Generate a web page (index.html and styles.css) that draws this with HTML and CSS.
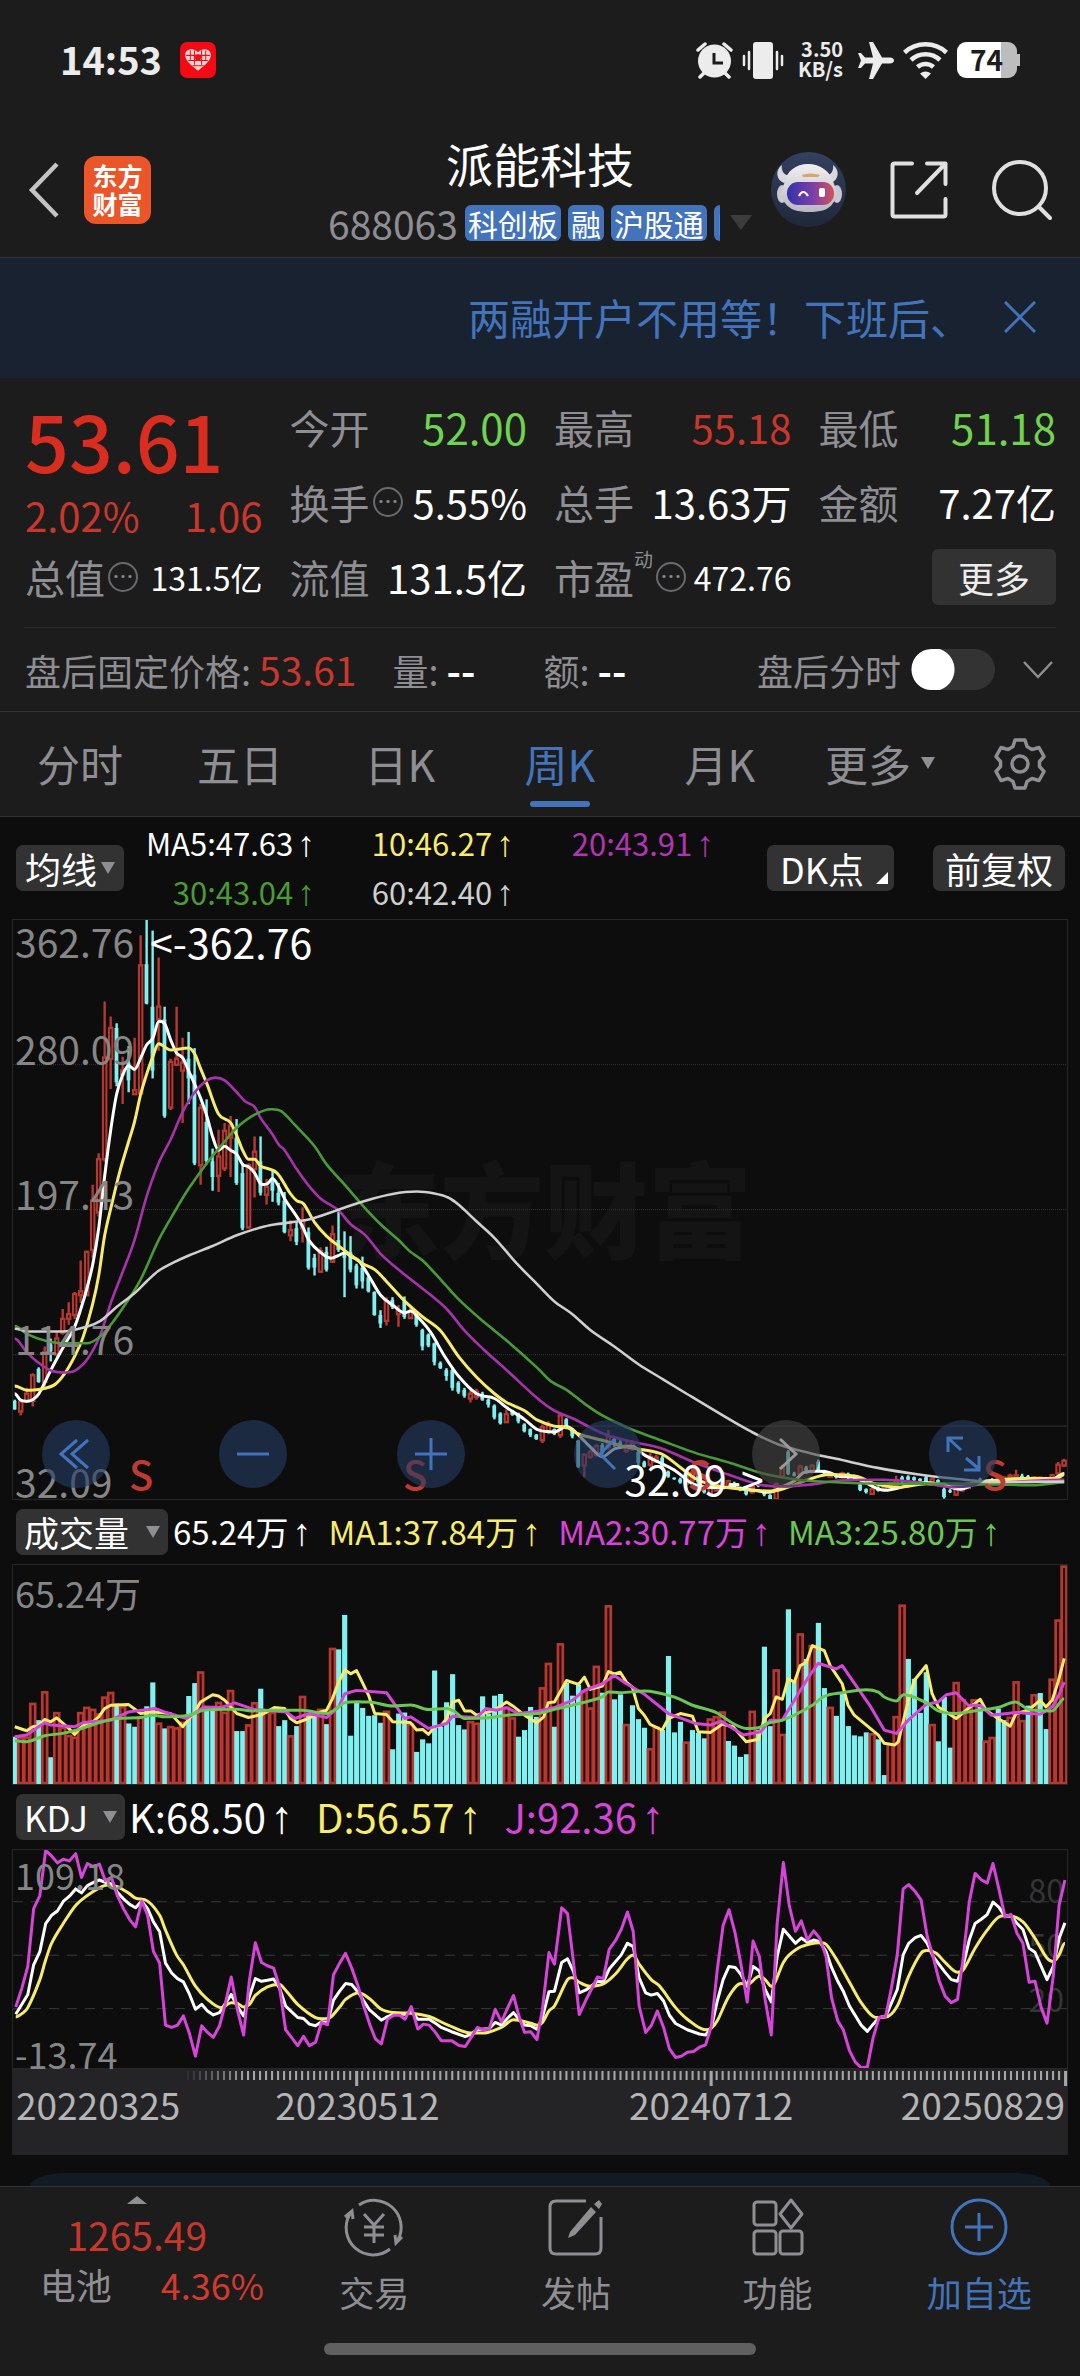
FILE: index.html
```html
<!DOCTYPE html>
<html lang="zh-CN">
<head>
<meta charset="utf-8">
<meta name="viewport" content="width=device-width, initial-scale=1">
<title>派能科技 688063</title>
<link rel="stylesheet" href="styles.css">
</head>
<body>
<div class="statusbar">
  <span class="clock">14:53</span>
  <svg class="badge-heart" viewBox="0 0 35 35"><rect width="35" height="35" rx="7" fill="#f30a14"/><path d="M17.500 28C10 22 5 18 5 12.500C5 7 13 5 17.500 10C22 5 30 7 30 12.500C30 18 25 22 17.500 28Z" fill="#ffd9d9"/><path d="M10 8v10M14 8v14M21 8v14M25 8v10M6 13h23M8 18h19M12 23h11" stroke="#f30a14" stroke-width="1"/><circle cx="17.500" cy="15" r="3" fill="#f30a14"/></svg>
  <div class="status-icons">
    <svg width="37" height="37" viewBox="0 0 37 37" fill="#ececec"><circle cx="18.500" cy="19" r="16.500"/><path d="M2 8L9 2M35 8L28 2M8 31L4 35M29 31L33 35" stroke="#ececec" stroke-width="3.500" stroke-linecap="round"/><path d="M18 11v10h9" fill="none" stroke="#1c1c1c" stroke-width="3"/></svg>
    <svg width="42" height="37" viewBox="0 0 42 37" fill="#ececec"><rect x="11" y="0" width="20" height="37" rx="3"/><path d="M7 10v17M2 14v9M35 10v17M40 14v9" stroke="#ececec" stroke-width="2.500" stroke-linecap="round"/></svg>
    <span class="netspeed"><span>3.50</span><span>KB/s</span></span>
    <svg width="36" height="37" viewBox="0 0 36 37" fill="#ececec"><path d="M36 18.500c0-2-2-3-4-3h-8L15 0h-4l4 15.500H7L3 11H0l3 7.500L0 26h3l4-4.500h8L11 37h4l9-15.500h8c2 0 4-1 4-3z"/></svg>
    <svg width="45" height="37" viewBox="0 0 45 37" fill="none" stroke="#ececec" stroke-width="4.500"><path d="M1.500 10.500a31 31 0 0 1 42 0M8 18a21 21 0 0 1 29 0M14.500 25a12 12 0 0 1 16 0"/><path d="M17 31.500q5.500-4 11 0L22.500 37z" fill="#ececec" stroke="none"/></svg>
    <span class="battery"><span class="battery-cell">74</span></span>
  </div>
</div>

<header class="topbar">
  <div class="topbar-left">
    <button class="icon-btn" aria-label="返回"><svg width="32" height="56" viewBox="0 0 32 56" fill="none" stroke="#c4c4c4" stroke-width="4.500"><path d="M29 2L4 28L29 54"/></svg></button>
    <span class="brand"><span>东方</span><span>财富</span></span>
  </div>
  <div class="topbar-title">
    <h1>派能科技</h1>
    <div class="subline">
      <div class="tags"><span class="code">688063</span><span class="tag">科创板</span><span class="tag">融</span><span class="tag">沪股通</span><span class="tag">L</span></div>
      <svg class="subline-caret" width="22" height="15" viewBox="0 0 22 15"><path d="M0 0h22L11 15z" fill="#3c3c3c"/></svg>
    </div>
  </div>
  <div class="topbar-right">
    <button class="icon-btn" aria-label="智能助手">
      <svg width="75" height="75" viewBox="0 0 75 75"><defs><linearGradient id="sky" x2="0" y2="1"><stop stop-color="#33405f"/><stop offset="1" stop-color="#20283a"/></linearGradient><linearGradient id="visor"><stop stop-color="#3430a8"/><stop offset=".55" stop-color="#7c3fa8"/><stop offset="1" stop-color="#d0525c"/></linearGradient><linearGradient id="shell" x2="0" y2="1"><stop stop-color="#f0eff2"/><stop offset="1" stop-color="#b9b7c0"/></linearGradient></defs><circle cx="37.500" cy="37.500" r="37.500" fill="url(#sky)"/><path d="M11 13C4 18 5 28 13 31L19 24C13 23 10 19 11 13ZM62 13C69 18 68 28 60 31L54 24C60 23 63 19 62 13Z" fill="#d9d8de"/><ellipse cx="11" cy="42" rx="5" ry="9" fill="#c9c7d0"/><ellipse cx="66" cy="42" rx="5" ry="9" fill="#c9c7d0"/><path d="M13 32C15 19 25 12 37 12S60 19 63 32C66 38 67 46 62 51C58 58 49 60 38 60S19 58 14 51C9 46 10 38 13 32Z" fill="url(#shell)"/><rect x="16" y="30" width="47" height="23" rx="11" fill="url(#visor)"/><path d="M28 44q4-8 9 0" fill="none" stroke="#fff" stroke-width="2.200"/><rect x="48" y="36" width="6" height="9" rx="2" fill="#fff"/><path d="M31 23q8-3 18 0l-2 2H32z" fill="#d9a668"/></svg>
    </button>
    <button class="icon-btn" aria-label="分享"><svg width="58" height="58" viewBox="0 0 58 58" fill="none" stroke="#e0e0e0" stroke-width="4" stroke-linecap="round" stroke-linejoin="round"><path d="M22 2.500H4.500q-2 0-2 2v49q0 2 2 2h49q2 0 2-2V38M37 2.500h18.500V23M55 3L27 32"/></svg></button>
    <button class="icon-btn" aria-label="搜索"><svg width="60" height="60" viewBox="0 0 60 60" fill="none" stroke="#e0e0e0" stroke-width="4" stroke-linecap="round"><circle cx="28" cy="28" r="26"/><path d="M47 47L58 58"/></svg></button>
  </div>
</header>

<aside class="banner">
  <a href="#margin">两融开户不用等！下班后、</a>
  <button class="icon-btn" aria-label="关闭"><svg width="32" height="32" viewBox="0 0 32 32" stroke="#4374bb" stroke-width="3"><path d="M1 1L31 31M31 1L1 31"/></svg></button>
</aside>

<section class="quote">
  <div class="quote-grid">
    <div class="price">
      <strong>53.61</strong>
      <div class="change"><span>2.02%</span><span>1.06</span></div>
    </div>
    <div class="cell"><span>今开</span><b class="down">52.00</b></div>
    <div class="cell"><span>最高</span><b class="up">55.18</b></div>
    <div class="cell"><span>最低</span><b class="down">51.18</b></div>
    <div class="cell"><span>换手</span><i class="info"></i><b>5.55%</b></div>
    <div class="cell"><span>总手</span><b>13.63万</b></div>
    <div class="cell"><span>金额</span><b>7.27亿</b></div>
    <div class="cell"><span>总值</span><i class="info"></i><b class="small">131.5亿</b></div>
    <div class="cell"><span>流值</span><b>131.5亿</b></div>
    <div class="cell"><span>市盈</span><sup>动</sup><i class="info"></i><b class="small">472.76</b></div>
    <div class="cell"><button class="more">更多</button></div>
  </div>
  <div class="after-hours">
    <span>盘后固定价格: <b class="up">53.61</b></span>
    <span>量: <b>--</b></span>
    <span class="turnover">额: <b>--</b></span>
    <label class="switch">盘后分时<input type="checkbox"></label>
    <button class="icon-btn" aria-label="展开"><svg width="30" height="18" viewBox="0 0 30 18" fill="none" stroke="#8e8e93" stroke-width="2.500"><path d="M1 1L15 16L29 1"/></svg></button>
  </div>
</section>

<nav class="tabs">
  <a href="#fs">分时</a><a href="#d5">五日</a><a href="#dk">日K</a><a href="#wk" class="active">周K</a><a href="#mk">月K</a>
  <a href="#more">更多<svg width="14" height="12" viewBox="0 0 14 12"><path d="M0 0h14L7 12z" fill="#8e8e93"/></svg></a>
  <button class="icon-btn gear" aria-label="设置"><svg width="52" height="52" viewBox="0 0 52 52" fill="none" stroke="#8e8e93" stroke-width="3.500" stroke-linejoin="round"><path d="M21 2h10l2 6.500l5 3l7-2l5 9l-4.500 5v5l4.500 5l-5 9l-7-2l-5 3L31 50H21l-2-6.500l-5-3l-7 2l-5-9l4.500-5v-5L2 18.500l5-9l7 2l5-3z"/><circle cx="26" cy="26" r="8"/></svg></button>
</nav>

<main class="charts">
  <div class="ma-row">
    <button class="pick">均线<i class="caret"></i></button>
    <div class="ma-values">
      <span class="white">MA5:47.63<i class="arrow">↑</i></span><span class="yellow">10:46.27<i class="arrow">↑</i></span><span class="purple">20:43.91<i class="arrow">↑</i></span>
      <span class="green">30:43.04<i class="arrow">↑</i></span><span class="grey">60:42.40<i class="arrow">↑</i></span>
    </div>
    <button class="pick dk">DK点<i class="corner"></i></button>
    <button class="pick">前复权</button>
  </div>

  <div class="plot plot-price">
    <span class="watermark">东方财富</span>
    <svg id="price" viewBox="36 48 3062 1469" preserveAspectRatio="none"></svg>
    <span class="axis y0">362.76</span><span class="axis y1">280.09</span><span class="axis y2">197.43</span><span class="axis y3">114.76</span><span class="axis y4">32.09</span>
    <span class="sell s1">S</span><span class="sell s2">S</span><span class="sell s3">S</span><span class="sell s4">S</span>
    <div class="controls">
      <button aria-label="最左"><svg viewBox="0 0 68 68"><path d="M35 20L19 34L35 48M46 20L30 34L46 48"/></svg></button>
      <button aria-label="缩小"><svg viewBox="0 0 68 68"><path d="M18 34h32"/></svg></button>
      <button aria-label="放大"><svg viewBox="0 0 68 68"><path d="M18 34h32M34 18v32"/></svg></button>
      <button aria-label="向左"><svg viewBox="0 0 68 68"><path d="M41 19L26 34L41 49"/></svg></button>
      <button aria-label="向右" class="off"><svg viewBox="0 0 68 68"><path d="M28 19L44 34L28 49"/></svg></button>
      <button aria-label="全屏"><svg viewBox="0 0 68 68"><path d="M32 30L19 18M19 32V18h15M37 38L50 49M50 36v14H35"/></svg></button>
    </div>
    <span class="mark high">&lt;-362.76</span><span class="mark low">32.09-&gt;</span>
  </div>

  <div class="sub-row vol">
    <button class="pick">成交量<i class="caret"></i></button>
    <span class="white">65.24万<i class="arrow">↑</i></span><span class="yellow">MA1:37.84万<i class="arrow">↑</i></span><span class="pink">MA2:30.77万<i class="arrow">↑</i></span><span class="lime">MA3:25.80万<i class="arrow">↑</i></span>
  </div>
  <div class="plot plot-volume">
    <svg id="volume" viewBox="36 191 3062 662" preserveAspectRatio="none"></svg>
    <span class="axis v0">65.24万</span>
  </div>

  <div class="sub-row kdj">
    <button class="pick">KDJ<i class="caret"></i></button>
    <span class="white">K:68.50<i class="arrow">↑</i></span><span class="yellow">D:56.57<i class="arrow">↑</i></span><span class="pink">J:92.36<i class="arrow">↑</i></span>
  </div>
  <div class="plot plot-kdj">
    <span class="level l80">80</span><span class="level l50">50</span><span class="level l20">20</span>
    <svg id="kdj" viewBox="36 207 3062 661" preserveAspectRatio="none"></svg>
    <span class="axis k0">109.18</span><span class="axis k1">-13.74</span>
  </div>
  <div class="timeline">
    <svg id="ticks" viewBox="36 0 3062 18" preserveAspectRatio="none"></svg>
    <time class="t0">20220325</time><time class="t1">20230512</time><time class="t2">20240712</time><time class="t3">20250829</time>
  </div>
  <div class="next-card"></div>
</main>

<footer class="dock">
  <div class="dock-row">
    <a class="index" href="#index">
      <svg width="20" height="8" viewBox="0 0 20 8"><path d="M0 8h20L10 0z" fill="#8e8e93"/></svg>
      <span class="index-value">1265.49</span>
      <span class="index-name">电池<b>4.36%</b></span>
    </a>
    <a class="item" href="#trade"><svg width="64" height="60" viewBox="0 0 64 60" fill="none" stroke="#8e8e93" stroke-width="3"><path d="M17 8A27 27 0 0 1 56 43M60 40L54 46L53 38M48 52A27 27 0 0 1 8 17M3 20L10 14L11 22"/><path d="M22 17L32 28L42 17M32 28V46M22 30H42M22 38H42"/></svg><span>交易</span></a>
    <a class="item" href="#post"><svg width="56" height="60" viewBox="0 0 56 60" fill="none" stroke="#8e8e93" stroke-width="3"><path d="M38 4H8Q2 4 2 10V51Q2 57 8 57H47Q53 57 53 51V20"/><path d="M43 10L48 15L27 38L20 41L22 35ZM46 7L51 3L54 7L51 12Z" fill="#8e8e93" stroke="none"/></svg><span>发帖</span></a>
    <a class="item" href="#tools"><svg width="56" height="60" viewBox="0 0 56 60" fill="none" stroke="#8e8e93" stroke-width="3" stroke-linejoin="round"><rect x="4" y="5" width="22" height="23" rx="3"/><rect x="4" y="34" width="22" height="23" rx="3"/><rect x="30" y="34" width="22" height="23" rx="3"/><path d="M41 3L52 17L41 31L30 17Z"/></svg><span>功能</span></a>
    <a class="item add" href="#add"><svg width="60" height="60" viewBox="0 0 60 60" fill="none" stroke="#4374bb" stroke-width="3"><circle cx="30" cy="30" r="27"/><path d="M30 16v28M16 30h28"/></svg><span>加自选</span></a>
  </div>
  <div class="home-bar"></div>
</footer>
<script src="charts.js"></script>
</body>
</html>
```

FILE: styles.css
```css
* { box-sizing: border-box; }
body {
  margin: 0;
  background: #1c1c1c;
  color: #fff;
  font-family: "Noto Sans CJK SC", "Noto Sans", sans-serif;
  font-size: 36px;
  line-height: 48px;
}
button { font: inherit; color: inherit; border: 0; padding: 0; background: none; }
a { color: inherit; text-decoration: none; }
b { font-weight: 400; }
i { font-style: normal; }
svg { display: block; flex: none; }
.icon-btn { display: block; line-height: 0; }

.statusbar { display: flex; align-items: center; height: 120px; padding: 0 60px; color: #ececec; }
.clock { padding-bottom: 2px; font-size: 38px; font-weight: 700; }
.badge-heart { width: 36px; height: 36px; margin-left: 18px; }
.status-icons { display: flex; align-items: center; gap: 9px; margin-left: auto; }
.netspeed { display: flex; flex-direction: column; align-items: flex-end; width: 50px; margin-right: 6px; padding-bottom: 2px; font-size: 20px; line-height: 20px; font-weight: 700; }
.battery { padding-right: 3px; border-radius: 9px; background: linear-gradient(#bdbdbd, #bdbdbd) right center / 6px 12px no-repeat; }
.battery-cell { display: block; width: 60px; height: 36px; padding-right: 14px; border-radius: 9px; background: linear-gradient(90deg, #fff 74%, #bdbdbd 74%); color: #1c1c1c; font-size: 28px; line-height: 34px; font-weight: 700; text-align: right; }

.topbar { display: grid; grid-template-columns: 1fr 424px 1fr; align-items: center; height: 138px; padding: 2px 28px 0; border-bottom: 1px solid #333; }
.topbar-left { display: flex; align-items: center; gap: 24px; }
.brand { display: flex; flex-direction: column; align-items: center; width: 67px; padding: 5px 0 7px; border-radius: 12px; background: #ea5529; font-size: 25px; line-height: 28px; font-weight: 700; }
.topbar-title { display: flex; flex-direction: column; align-items: center; gap: 12px; margin-top: -6px; }
h1 { margin: 0; font-size: 47px; line-height: 60px; font-weight: 400; }
.subline { display: flex; align-items: center; gap: 10px; }
.tags { display: flex; align-items: center; gap: 7px; width: 392px; overflow: hidden; white-space: nowrap; }
.code { color: #8e8e93; font-size: 39px; line-height: 36px; }
.tag { flex: none; padding: 0 3px; border-radius: 6px; background: #4374bb; font-size: 30px; line-height: 36px; }
.topbar-right { display: flex; align-items: center; justify-content: flex-end; gap: 44px; }

.banner { display: flex; align-items: center; justify-content: flex-end; gap: 32px; height: 120px; padding: 0 44px 2px; background: #182230; color: #4374bb; font-size: 42px; }

.quote { border-bottom: 1px solid #333; }
.quote-grid { display: grid; grid-template-columns: repeat(4, 1fr); grid-auto-rows: 75px; column-gap: 27px; padding: 11px 24px 13px 25px; font-size: 40px; }
.price { grid-row: span 2; color: #d92d20; }
.price strong { display: block; font-size: 77px; line-height: 102px; font-weight: 500; }
.change { display: flex; justify-content: space-between; color: #c8372c; }
.cell { display: flex; align-items: center; white-space: nowrap; }
.cell span { color: #8e8e93; }
.cell b { margin-left: auto; }
.cell .small { font-size: 32px; }
.cell sup { align-self: flex-start; margin-top: 8px; color: #8e8e93; font-size: 19px; line-height: 24px; }
.info { width: 30px; height: 30px; margin-left: 3px; border: 2px solid #6a6a6e; border-radius: 50%; background: radial-gradient(circle, #8e8e93 1px, transparent 2px) center / 7px 7px repeat-x; background-clip: content-box; padding: 0 3px; }
.cell .down { color: #6fd34f; font-size: 42px; }
.up { color: #c8372c; }
.more { width: 124px; height: 56px; margin-left: auto; border-radius: 6px; background: #323232; color: #ececec; font-size: 36px; line-height: 52px; }
.after-hours { display: flex; align-items: center; height: 84px; margin: 0 24px; padding: 0 3px 0 1px; border-top: 1px solid #2a2a2a; color: #8e8e93; gap: 36px; }
.after-hours b { font-size: 39px; }
.after-hours b:not(.up) { color: #fff; font-weight: 700; }
.turnover { margin-left: 32px; }
.switch { display: flex; align-items: center; gap: 10px; margin-left: auto; margin-right: -8px; }
.switch input { appearance: none; width: 84px; height: 41px; margin: 0; border-radius: 21px; background: radial-gradient(circle at 22px 50%, #fff 21px, transparent 22px) #333; }

.tabs { display: flex; height: 105px; border-bottom: 1px solid #333; color: #8e8e93; font-size: 43px; }
.tabs a { position: relative; flex: 160; display: flex; align-items: center; justify-content: center; gap: 10px; padding-bottom: 2px; }
.tabs .gear { flex: 120; display: flex; align-items: center; justify-content: center; }
.tabs .active { color: #4374bb; }
.active::after { content: ""; position: absolute; left: 50%; bottom: 9px; width: 60px; height: 6px; margin-left: -30px; border-radius: 3px; background: #4374bb; }

.charts { padding: 0 12px; background: #0d0d0d; }
.white { color: #fff; }
.yellow { color: #f8ec6c; }
.purple { color: #b035b3; }
.green { color: #4a9a36; }
.grey { color: #cfcfcf; }
.pink { color: #d744d9; }
.lime { color: #6cc654; }
.arrow { font-family: "Liberation Sans", sans-serif; font-size: 115%; line-height: 1; margin-left: 4px; }
.pick { display: flex; align-items: center; justify-content: space-between; height: 46px; padding: 0 9px; border-radius: 7px; background: #323232; white-space: nowrap; line-height: 42px; }
.caret { margin-left: 4px; border: 7px solid transparent; border-top: 12px solid #8e8e93; border-bottom: 0; }
.ma-row { display: flex; align-items: center; height: 102px; padding: 0 3px 0 4px; }
.ma-values { display: grid; grid-template-columns: 191px 199px 200px; grid-auto-rows: 49px; align-items: center; justify-items: end; margin-right: auto; padding-bottom: 2px; font-size: 31px; }
.dk { width: 127px; margin-right: 39px; padding: 0 6px 0 13px; }
.corner { align-self: flex-end; margin-bottom: 7px; border: 6px solid transparent; border-right-color: #fff; border-bottom-color: #fff; }
.ma-row .pick:last-child { width: 132px; justify-content: center; }

.plot { position: relative; border: 1px solid #262626; }
.plot svg { width: 100%; height: 100%; }
.plot > svg { position: relative; }
.plot-price { height: 581px; }
.plot-volume { height: 221px; }
.plot-kdj { height: 220px; }
.axis { position: absolute; left: 2px; color: #868686; font-size: 39px; }
.y0 { top: -3px; }
.y1 { top: 18%; }
.y2 { top: 43%; }
.y3 { top: 68%; }
.y4 { bottom: -6px; }
.v0 { top: 3px; font-size: 36px; }
.k0 { top: 0; font-size: 36px; }
.k1 { bottom: -9px; font-size: 36px; }
.watermark { position: absolute; top: 39%; left: 0; width: 100%; text-align: center; text-indent: 8px; color: #141414; font-size: 104px; line-height: 120px; font-weight: 900; }
.mark { position: absolute; font-size: 41px; }
.high { left: 13%; top: -3px; }
.low { left: 58%; bottom: -3px; }
.sell { position: absolute; bottom: 2px; color: #bf3a30; font-size: 40px; font-weight: 500; }
.s1 { left: 11%; }
.s2 { left: 37%; }
.s3 { left: 64%; }
.s4 { left: 92%; }
.controls { position: absolute; left: 29px; right: 70px; bottom: 11px; display: flex; justify-content: space-between; }
.controls button { width: 68px; height: 68px; border-radius: 50%; background: rgba(37, 60, 98, .62); }
.controls path { fill: none; stroke: #4374bb; stroke-width: 3; }
.controls .off { background: rgba(70, 70, 70, .6); }
.controls .off path { stroke: #9a9a9a; }
.level { position: absolute; right: 3px; color: #353535; font-size: 32px; }
.l80 { top: 15px; }
.l50 { top: 70px; }
.l20 { top: 124px; }

.sub-row { display: flex; align-items: center; height: 64px; padding-left: 4px; white-space: nowrap; }
.sub-row > span { padding-bottom: 2px; }
.sub-row .pick { padding: 0 8px; }
.sub-row .caret { margin-left: 12px; }
.vol { font-size: 33px; gap: 17px; }
.vol .pick { width: 152px; font-size: 35px; margin-right: -12px; }
.kdj { font-size: 40px; gap: 23px; }
.kdj .pick { width: 109px; font-size: 35px; margin-right: -19px; }

.timeline { position: relative; height: 86px; background: #242426; color: #b5b5b5; font-size: 37px; }
.timeline svg { width: 100%; height: 18px; }
.timeline time { position: absolute; top: 11px; }
.t0 { left: 4px; }
.t1 { left: 32.7%; transform: translateX(-50%); }
.t2 { left: 66.2%; transform: translateX(-50%); }
.t3 { right: 3px; }
.next-card { height: 13px; margin: 18px 18px 0; border-radius: 36px 36px 0 0 / 13px 13px 0 0; background: #121a23; }

.dock { border-top: 1px solid #2f3438; color: #8e8e93; }
.dock-row { display: flex; height: 156px; }
.index { flex: 274; display: flex; flex-direction: column; align-items: center; padding-top: 9px; }
.index-value { margin-top: 5px; color: #c8372c; font-size: 39px; line-height: 50px; }
.index-name { display: flex; gap: 49px; font-size: 36px; line-height: 50px; margin-left: 30px; }
.index-name b { color: #d23a2e; }
.item { flex: 202; display: flex; flex-direction: column; align-items: center; gap: 11px; padding-top: 10px; font-size: 35px; }
.add { color: #4374bb; }
.home-bar { width: 40%; height: 12px; margin: 0 auto 21px; border-radius: 6px; background: #606060; }
```

FILE: charts.js
```js
// Every plot is 176 weekly slots wide; x grows by STEP units per week.
const NS = "http://www.w3.org/2000/svg";
const STEP = 17.42, LEFT = 41, HALF = 1568;
const RED = "#b43a31", CYAN = "#80f0f0";
const xAt = i => LEFT + STEP * i;

function add(svg, name, attrs) {
  const el = document.createElementNS(NS, name);
  for (const key in attrs) el.setAttribute(key, attrs[key]);
  svg.appendChild(el);
}

// "x,y x,y ..." for the older half, then for the newer half (shifted by HALF)
function points(older, newer) {
  const read = (text, shift) => text.trim().split(/\s+/).map(p => {
    const [x, y] = p.split(",").map(Number);
    return [x + shift, y];
  });
  return read(older, 0).concat(read(newer, HALF)).sort((a, b) => a[0] - b[0]);
}

function curve(svg, color, width, older, newer) {
  const p = points(older, newer);
  let d = `M${p[0]}`;
  for (let i = 0; i < p.length - 1; i++) {
    const a = p[i - 1] || p[i], b = p[i], c = p[i + 1], e = p[i + 2] || c;
    const dx = (c[0] - b[0]) / 3;
    const s1 = (c[1] - a[1]) / (c[0] - a[0] || 1), s2 = (e[1] - b[1]) / (e[0] - b[0] || 1);
    const flat = (b[1] - a[1]) * (c[1] - b[1]) <= 0 ? 0 : s1;
    const flat2 = (c[1] - b[1]) * (e[1] - c[1]) <= 0 ? 0 : s2;
    d += `C${b[0] + dx},${b[1] + flat * dx} ${c[0] - dx},${c[1] - flat2 * dx} ${c}`;
  }
  add(svg, "path", { d, fill: "none", stroke: color, "stroke-width": width, "vector-effect": "non-scaling-stroke", "stroke-linejoin": "round" });
}

// straight segments between weeks, for the jagged indicators
function zigzag(svg, color, width, older, newer) {
  const d = "M" + points(older, newer).join("L");
  add(svg, "path", { d, fill: "none", stroke: color, "stroke-width": width, "vector-effect": "non-scaling-stroke", "stroke-linejoin": "round" });
}

function rule(svg, x1, y, color, dash) {
  add(svg, "path", { d: `M${x1},${y}H3098`, stroke: color, "stroke-dasharray": dash, "vector-effect": "non-scaling-stroke" });
}

// ---- weekly candles: colour, high, body top, body bottom, low
const price = document.getElementById("price");
[415, 783, 1151].forEach(y => rule(price, 36, y, "#343434", "1 1"));
rule(price, 1634, 1332, "#333", "none");
const candles = `c1265,1268,1290,1290 r1270,1270,1295,1305 r1235,1250,1270,1272 r1198,1203,1268,1282 c1183,1187,1220,1222
r1130,1145,1220,1232 c1110,1125,1142,1168 r1090,1110,1150,1155 r1035,1060,1095,1100 r1018,1048,1060,1075 r992,997,1050,1060
r912,990,1000,1020 r887,890,1000,1002 r720,760,885,905 r640,655,790,800 r255,397,655,662 r293,322,400,477 c310,322,460,470
r395,430,440,515 c368,410,455,485 r347,480,490,492 r87,163,488,490 c48,160,260,262 c75,268,430,450 r143,268,300,380
c268,300,545,550 r400,408,524,530 r268,400,415,418 r347,410,430,563 c332,400,450,515 c373,440,665,670 r515,525,670,720
c503,560,660,668 c628,660,700,735 r580,648,697,738 r563,583,678,685 r545,570,600,700 c553,600,715,720 c665,690,830,835
r665,670,828,830 r597,636,680,752 c597,660,740,747 r705,725,745,770 c680,710,735,763 c715,740,765,772 c738,760,840,843
r810,835,848,863 c815,830,865,873 r777,810,830,866 c828,840,930,935 c895,905,930,950 r878,888,940,943 c877,890,935,940
r823,845,915,918 c788,860,885,890 c838,890,905,1005 c850,890,935,942 c920,925,975,983 c902,930,965,983 c950,955,990,993
c990,992,1050,1052 c1038,1050,1072,1083 r1005,1015,1065,1077 c1005,1012,1030,1035 r1025,1040,1048,1080 c1003,1015,1055,1060
r1027,1042,1058,1060 c1040,1045,1075,1080 c1085,1088,1130,1140 c1097,1100,1128,1132 c1120,1122,1170,1178 c1168,1172,1185,1187
c1185,1190,1205,1217 c1183,1190,1235,1242 c1218,1222,1245,1250 c1235,1240,1255,1260 r1240,1250,1262,1272 r1237,1245,1258,1265
c1245,1250,1265,1268 c1262,1265,1278,1285 c1277,1280,1310,1315 c1297,1300,1325,1328 r1290,1302,1322,1324 c1291,1295,1303,1306
c1298,1300,1320,1325 c1325,1328,1345,1348 c1338,1340,1355,1360 c1352,1354,1365,1367 r1328,1335,1368,1375 r1320,1330,1345,1353
c1338,1340,1352,1355 r1298,1305,1355,1362 c1312,1315,1335,1340 c1340,1342,1358,1363 c1367,1369,1435,1438 r1400,1405,1432,1462
r1392,1398,1410,1415 r1378,1383,1405,1410 c1375,1380,1400,1405 r1342,1358,1385,1392 c1360,1365,1380,1385 c1368,1372,1385,1390
r1366,1380,1395,1400 r1368,1375,1390,1395 c1395,1398,1425,1435 c1420,1424,1435,1437 r1400,1410,1430,1435 r1405,1412,1422,1425
c1408,1412,1435,1440 c1445,1448,1460,1463 c1462,1463,1467,1468 c1463,1467,1475,1478 r1445,1455,1478,1482 r1440,1450,1470,1475
c1450,1455,1475,1480 c1485,1488,1500,1503 r1483,1488,1502,1507 r1478,1482,1495,1498 r1473,1478,1490,1492 r1468,1472,1485,1490
c1473,1477,1490,1492 c1486,1488,1495,1497 c1493,1496,1505,1508 r1483,1487,1500,1503 c1474,1478,1484,1487 c1496,1498,1506,1510
c1505,1507,1517,1519 r1475,1480,1517,1518 r1430,1437,1460,1465 c1393,1397,1453,1456 c1448,1452,1458,1460 r1430,1435,1453,1458
c1433,1437,1450,1453 r1428,1433,1448,1450 c1417,1422,1443,1446 c1443,1446,1452,1455 r1448,1452,1460,1462 c1453,1456,1462,1465
r1448,1452,1460,1463 c1450,1453,1463,1466 c1455,1458,1464,1467 c1476,1480,1494,1497 c1490,1492,1500,1503 r1487,1492,1504,1506
c1485,1488,1496,1498 r1478,1482,1490,1494 r1473,1477,1486,1489 r1458,1470,1480,1483 c1458,1462,1473,1476 c1457,1460,1468,1471
c1460,1462,1469,1472 c1464,1466,1471,1473 c1456,1462,1474,1477 r1463,1467,1475,1477 c1467,1469,1478,1481 c1488,1492,1512,1516
c1492,1495,1499,1502 r1486,1491,1506,1509 r1483,1487,1495,1498 r1473,1477,1489,1491 r1466,1470,1480,1483 c1463,1467,1474,1476
r1466,1470,1476,1478 c1464,1467,1476,1478 r1463,1466,1474,1476 r1460,1463,1471,1474 r1453,1458,1469,1471 r1443,1457,1466,1468
c1453,1458,1466,1469 c1456,1459,1467,1469 r1459,1462,1469,1471 r1460,1463,1469,1471 c1461,1464,1470,1472 r1453,1457,1469,1471
r1423,1430,1452,1456 r1415,1420,1432,1435`.split(/\s+/);
candles.forEach((row, i) => {
  const [high, top, bottom, low] = row.slice(1).split(",").map(Number);
  const x = xAt(i), up = row[0] === "r", color = up ? RED : CYAN;
  add(price, "path", { d: up ? `M${x},${high}V${top}M${x},${bottom}V${low}` : `M${x},${high}V${low}`, stroke: color, "stroke-width": 7 });
  add(price, "rect", up
    ? { x: x - 5, y: top, width: 10, height: Math.max(bottom - top, 3), fill: "#2a0505", stroke: color, "stroke-width": 6 }
    : { x: x - 6, y: top, width: 11, height: bottom - top, fill: color });
});

curve(price, "#fff", 3, `41,1250 58,1266 76,1269 93,1265 111,1250 128,1222 146,1190 180,1135 215,1080 233,1035 250,985 268,920 285,830 302,700
320,580 337,490 355,440 372,418 389,427 407,398 424,365 442,348 460,305 477,312 494,352 511,385 529,398 546,430 564,465 581,500 599,545 616,598
633,632 651,622 668,632 686,642 703,668 720,674 738,690 755,717 773,718 790,704 808,725 825,755 860,800 877,825 895,860 930,892 960,906 982,899
1000,892 1020,903 1040,912 1069,950 1104,1000 1139,1025 1174,1045 1191,1040 1215,1058 1250,1095 1290,1155 1330,1205 1383,1250 1435,1262
1470,1285 1522,1315 1560,1341`,
`41,1347 76,1333 93,1340 111,1355 145,1385 180,1410 215,1390 267,1383 302,1405 354,1428 395,1447 442,1478 500,1488 560,1488 620,1495 665,1500
705,1485 740,1470 765,1450 825,1447 870,1460 912,1462 947,1477 1000,1495 1060,1485 1121,1475 1173,1482 1220,1492 1260,1480 1310,1470
1400,1470 1487,1468 1522,1452`);
curve(price, "#f8ec6c", 3, `41,1230 76,1241 111,1239 155,1228 185,1200 215,1155 240,1105 268,1020 285,950 302,850 320,780 345,690 372,610 389,560
407,490 424,440 442,395 459,362 494,378 546,373 564,388 581,425 600,465 633,540 668,562 686,595 703,632 720,655 738,655 755,672 803,690
840,740 860,760 880,768 912,815 947,850 982,875 1020,900 1052,920 1087,935 1121,965 1174,1015 1226,1055 1278,1090 1330,1155 1383,1208
1435,1250 1470,1272 1520,1292 1560,1317`,
`40,1332 76,1335 111,1352 180,1368 250,1385 350,1402 407,1437 450,1465 494,1480 560,1490 670,1497 720,1487 770,1470 840,1455 920,1460
970,1478 1040,1487 1121,1478 1200,1482 1300,1472 1400,1465 1500,1465 1522,1455`);
curve(price, "#a832ab", 2.6, `41,1110 76,1145 111,1172 146,1191 185,1196 215,1192 245,1170 268,1140 290,1100 320,1020 355,940 389,860 424,750 459,665
494,605 529,535 564,485 599,455 625,448 651,455 686,485 710,508 738,522 755,550 790,592 808,618 825,632 860,680 895,722 930,755 982,785
1017,820 1060,848 1104,895 1160,938 1243,995 1296,1035 1348,1090 1400,1135 1470,1190 1560,1262`,
`41,1293 93,1312 180,1350 267,1372 350,1388 450,1425 546,1455 633,1480 703,1485 790,1480 870,1470 1000,1468 1100,1475 1200,1487 1300,1478
1400,1472 1522,1468`);
curve(price, "#4a9a36", 2.6, `41,1078 76,1098 128,1115 180,1122 250,1122 285,1108 320,1075 372,1010 407,960 459,860 511,780 546,730 599,665 651,610
686,575 738,542 785,528 815,533 855,568 912,622 947,668 1000,720 1060,780 1104,820 1156,860 1191,890 1226,912 1278,960 1330,1010 1400,1065
1470,1115 1560,1185`,
`30,1218 76,1240 128,1275 180,1305 250,1335 350,1368 450,1400 550,1425 650,1453 750,1468 870,1475 1000,1478 1200,1478 1330,1480 1440,1482 1522,1475`);
curve(price, "#cfcfcf", 2.6, `41,1085 80,1092 180,1092 250,1080 290,1065 337,1030 389,995 424,965 459,938 500,918 550,898 616,875 686,848 755,828
800,820 895,808 982,783 1060,760 1139,743 1209,737 1260,742 1300,752 1330,770 1383,813 1435,855 1500,920 1560,973`,
`40,1015 93,1048 145,1088 215,1130 285,1175 350,1210 425,1250 530,1305 610,1345 690,1378 790,1402 860,1415 980,1438 1100,1455 1200,1465
1320,1474 1522,1473`);

// ---- weekly volume: colour and top edge of each bar, baseline at 853
const volume = document.getElementById("volume");
`c710 r710 r710 r608 c660 r573 c772 r636 r680 r705 r710 r636 r620 r626 r640 r589 r575 c610 r618 c670 c680 r650 c618 c546 r668 c685 r678 r682
r665 c587 c548 r513 c630 c630 r605 r635 r569 c693 c693 r673 r606 c565 r635 r635 c678 c660 r706 c678 r587 c645 c645 r626 c672 r442 c446 c342
c707 c606 c623 c647 c645 c668 r632 c748 c640 c637 r670 c756 c718 c730 c510 c680 c606 c521 c675 c688 r663 r668 c588 c640 c586 c581 r620 r652
c710 c690 c620 c650 r561 r487 c680 r428 c547 c586 c553 r570 r622 r496 c577 r313 c597 c582 r672 c615 c657 c683 r745 r680 c690 c466 c697 c665
r725 c690 c698 c715 r655 r648 r634 c723 c737 c771 c763 r632 c690 c438 c678 r507 r702 c325 c540 r398 c475 r433 c366 c563 r620 c647 c580 c678
c706 c709 c697 r700 c718 c826 r730 r648 r311 c475 c535 c638 c515 r672 c724 c590 c743 r545 r597 r620 r597 c620 r722 r711 c625 c660 r650 r543
r660 c616 r582 c578 c687 r535 r356 r193`.split(/\s+/).forEach((bar, i) => {
  const top = Number(bar.slice(1)), x = xAt(i);
  add(volume, "rect", bar[0] === "r"
    ? { x: x - 7, y: top + 3, width: 14, height: 847 - top, fill: "#2a0505", stroke: RED, "stroke-width": 8 }
    : { x: x - 7, y: top, width: 15, height: 853 - top, fill: CYAN });
});
zigzag(volume, "#f8ec6c", 3, `41,680 76,692 93,680 110,678 128,658 146,665 163,653 198,685 215,703 233,682 250,670 268,665 285,650 302,625 320,615
372,613 407,640 442,635 494,640 529,680 564,635 581,605 616,583 633,587 651,600 686,640 720,652 760,643 795,622 825,625 842,655 860,668
895,655 930,635 947,630 964,595 982,545 1000,508 1017,520 1034,510 1052,548 1069,585 1087,640 1121,643 1139,665 1190,667 1209,690
1226,688 1243,703 1261,680 1278,678 1296,655 1313,605 1331,600 1348,632 1366,632 1383,645 1400,640 1435,630 1470,605 1488,617 1522,645 1557,668`,
`10,650 23,607 41,605 76,540 111,552 128,530 145,567 180,557 198,513 215,520 232,515 250,545 267,560 285,625 302,645 319,673 354,690
372,655 407,640 442,648 459,695 494,697 529,672 560,680 598,725 633,718 651,655 668,640 685,590 703,597 720,535 738,545 755,495 773,485
790,435 825,450 842,495 877,550 894,615 912,645 947,675 982,705 999,730 1030,735 1040,725 1069,600 1086,540 1121,495 1138,580 1156,620
1208,655 1243,625 1278,597 1295,630 1330,655 1365,678 1382,640 1417,630 1452,600 1469,620 1487,600 1504,545 1522,473`);
zigzag(volume, "#d744d9", 3, `41,710 76,705 110,680 128,668 146,675 215,680 240,667 320,660 372,635 450,625 490,640 540,655 590,620 640,622 680,608
738,628 830,635 855,655 895,640 947,652 982,620 1000,580 1034,570 1121,577 1174,655 1191,650 1243,685 1296,670 1313,648 1383,652
1410,625 1440,630 1470,622 1505,640 1560,633`,
`41,622 93,600 128,570 180,550 215,525 250,550 300,580 372,640 450,670 494,675 525,663 590,705 640,695 668,660 703,660 738,600 773,540
807,488 860,505 877,495 912,548 960,620 999,690 1034,700 1069,660 1121,612 1156,605 1180,583 1208,577 1243,615 1278,615 1310,645 1382,637
1452,642 1487,620 1504,590 1522,545`);
curve(volume, "#6cc654", 3, `41,722 76,725 128,707 180,700 230,687 285,668 337,655 407,652 442,645 477,650 546,645 590,630 686,627 730,632 790,630
877,630 947,640 982,620 1000,607 1069,605 1139,617 1191,614 1243,628 1296,625 1320,635 1348,655 1418,653 1470,645 1560,640`,
`41,627 93,615 180,590 198,575 232,577 302,572 389,590 442,615 511,637 560,670 598,685 633,683 660,670 703,660 738,645 790,615 825,588
877,577 947,568 982,575 999,590 1034,602 1055,583 1121,607 1156,632 1200,640 1260,632 1330,622 1380,605 1417,627 1487,632 1522,595`);

// ---- KDJ oscillator
const kdj = document.getElementById("kdj");
[364, 526, 688].forEach(y => rule(kdj, 36, y, "#3a3a3a", "10 8"));
zigzag(kdj, "#fff", 3, `44,705 79,645 96,555 114,515 131,430 148,405 165,392 182,363 200,347 218,325 235,337 252,315 270,305 287,298 304,305
322,310 339,335 357,355 375,372 392,382 410,362 427,385 444,425 462,455 479,550 497,580 514,597 531,607 549,645 566,690 584,675 601,695
618,707 636,700 653,672 670,645 688,682 706,710 723,650 740,597 758,605 775,602 793,598 810,625 828,680 845,697 863,715 880,718 897,735
915,740 932,728 950,730 967,662 985,635 1002,612 1020,615 1040,640 1055,665 1072,692 1106,723 1124,712 1142,705 1175,705 1193,695
1212,720 1245,720 1263,732 1280,745 1310,758 1350,773 1367,765 1385,752 1420,748 1437,730 1455,738 1472,718 1490,700 1507,722 1522,738
1540,740 1558,750`,
`6,715 25,637 41,635 62,548 79,537 96,575 113,640 131,632 148,620 166,605 183,607 200,568 235,525 253,490 270,500 287,595 306,640 322,647
340,642 358,665 375,708 393,733 427,752 462,765 480,768 497,745 514,665 531,600 548,560 566,563 583,585 601,620 618,560 636,573 653,630
671,668 688,530 706,447 723,468 741,490 758,474 776,487 794,480 812,485 830,515 846,563 864,605 880,635 898,680 932,738 950,757 967,735
984,715 1003,712 1037,630 1054,525 1070,490 1089,473 1106,466 1124,490 1141,530 1176,578 1194,600 1212,605 1229,555 1246,480 1263,430
1281,417 1298,403 1315,365 1332,380 1350,408 1367,405 1385,430 1402,448 1420,505 1437,517 1455,560 1472,600 1490,560 1507,475 1524,428`);
curve(kdj, "#f8ec6c", 3, `44,713 62,703 79,685 114,600 131,540 148,490 182,430 218,375 252,345 287,322 310,313 339,318 375,340 392,353 427,362
462,405 479,450 511,525 531,555 566,620 601,660 640,685 670,670 688,672 706,683 723,675 740,648 775,622 810,615 828,632 863,675 915,715
950,718 985,683 1002,660 1040,640 1072,658 1106,690 1142,700 1193,702 1245,712 1300,738 1367,762 1402,762 1455,745 1490,722 1540,732 1560,738`,
`6,730 25,695 41,680 79,600 96,595 113,608 145,620 183,613 218,583 253,537 270,525 287,553 322,600 345,618 393,685 427,720 480,752 497,747
514,725 548,650 583,612 601,615 636,590 653,600 671,620 706,548 723,525 758,500 812,488 830,493 864,545 898,608 932,670 967,712 1003,713
1037,680 1070,590 1106,520 1124,512 1150,520 1176,548 1212,578 1229,570 1263,505 1298,450 1332,410 1367,408 1402,425 1437,475 1472,535
1490,545 1507,525 1524,490`);
zigzag(kdj, "#d744d9", 3, `44,683 62,625 79,560 96,385 114,345 131,208 148,225 165,246 182,235 200,240 218,218 235,290 252,248 270,258 287,250
304,300 322,290 339,345 357,385 375,418 392,440 410,362 427,405 444,515 462,550 479,738 497,745 514,738 531,710 549,765 566,832 584,740
601,760 618,775 636,740 653,672 670,592 688,692 706,768 723,600 740,488 758,548 775,558 793,565 810,620 828,752 845,775 863,800 880,772
897,800 915,790 932,730 950,737 967,585 985,550 1002,520 1020,565 1040,625 1055,680 1072,735 1089,780 1106,795 1124,720 1142,708
1160,708 1175,720 1193,682 1212,750 1228,735 1245,738 1263,760 1280,785 1310,785 1332,800 1350,803 1367,775 1385,745 1402,752 1420,748
1437,690 1455,728 1472,688 1490,648 1507,715 1522,760 1540,758 1558,782`,
`6,690 25,518 41,553 62,382 79,400 96,545 113,706 131,665 148,630 166,592 183,597 200,508 218,482 235,448 253,395 270,455 287,680 306,760
322,740 340,695 358,745 375,810 393,836 410,832 427,820 445,818 462,805 480,798 497,740 514,570 531,435 548,388 566,460 583,555 601,668
618,483 636,530 653,660 671,768 688,430 706,245 723,375 741,453 758,422 776,480 794,452 812,475 830,530 846,655 864,725 880,752 898,815
915,850 932,867 950,865 967,775 984,715 1003,712 1020,625 1037,525 1054,325 1070,312 1089,333 1106,358 1124,470 1141,530 1159,605
1176,650 1194,670 1212,660 1229,530 1246,365 1263,278 1281,297 1298,307 1315,248 1332,325 1350,410 1367,402 1385,460 1402,490 1420,608
1437,605 1455,685 1472,732 1490,590 1507,375 1524,298`);

// ---- week ticks under the charts, fading in; long ones mark the dated weeks
const ticks = document.getElementById("ticks");
for (let i = 29; i < 176; i++) {
  const long = i === 57 || i === 116 || i === 175;
  add(ticks, "rect", { x: xAt(i) - 3, y: 2, width: long ? 9 : 6, height: long ? 15 : 9, fill: "#a6a6a6", opacity: Math.min(1, (i - 28) / 11) });
}
```
